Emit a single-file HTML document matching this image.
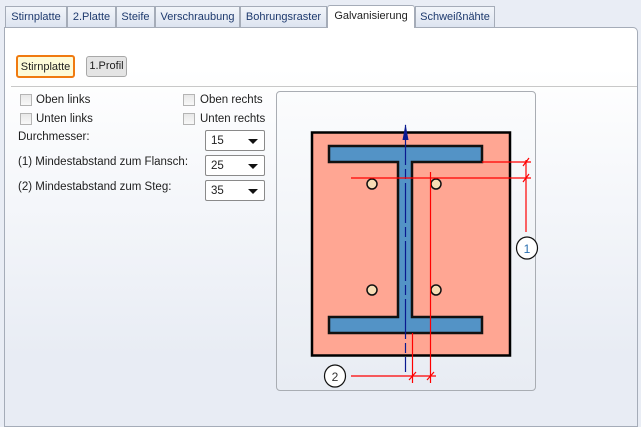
<!DOCTYPE html>
<html><head><meta charset="utf-8"><style>
*{margin:0;padding:0;box-sizing:border-box}
body{width:641px;height:409px;overflow:hidden;background:#e9edf5;font-family:"Liberation Sans",sans-serif;font-size:11.5px;color:#1e1e1e;position:relative}
.tab{position:absolute;top:6px;height:21px;border:1px solid #a5acb8;border-bottom:none;background:linear-gradient(#f2f5fa,#dde4f0);color:#1e3a6e;padding-top:4px;text-align:center;font-size:11px;white-space:nowrap}
.panel{position:absolute;left:4px;top:27px;width:634px;height:400px;border:1px solid #a5acb8;border-radius:0 5px 0 0;background:linear-gradient(#ffffff 0px,#ffffff 40px,#e8ecf4 330px)}
.a{position:absolute;white-space:nowrap}
.cb{position:absolute;width:12px;height:12px;border:1px solid #b4b4b4;background:linear-gradient(#e8e8e8,#f8f8f8)}
.dd{position:absolute;left:205px;width:60px;height:21px;border:1px solid #8a8a8a;border-radius:2px;background:#fff;padding:4px 0 0 5px}
.dd:after{content:"";position:absolute;right:6px;top:8px;border-left:5px solid transparent;border-right:5px solid transparent;border-top:5px solid #111}
</style></head><body>
<div class="panel"></div>
<div class="tab" style="left:5px;width:62px">Stirnplatte</div>
<div class="tab" style="left:67px;width:49px">2.Platte</div>
<div class="tab" style="left:116px;width:39px">Steife</div>
<div class="tab" style="left:155px;width:85px">Verschraubung</div>
<div class="tab" style="left:240px;width:87px">Bohrungsraster</div>
<div class="tab" style="left:327px;top:5px;width:88px;height:23px;background:#fff;color:#1e1e1e;border-radius:3px 3px 0 0">Galvanisierung</div>
<div class="tab" style="left:415px;width:80px">Schweißnähte</div>

<div class="a" style="left:16px;top:55px;width:59px;height:23px;border:2px solid #f07a10;border-radius:3px;background:#fdfbd8;padding-top:4px;text-align:center;font-size:11px">Stirnplatte</div>
<div class="a" style="left:86px;top:56px;width:41px;height:21px;border:1px solid #a8a8a8;border-radius:3px;background:#e4e4e4;padding-top:3px;text-align:center;font-size:11px">1.Profil</div>
<div class="a" style="left:11px;top:86px;width:626px;height:1px;background:#c8c8c8"></div>

<div class="cb" style="left:20px;top:94px"></div><div class="a" style="left:36px;top:94px">Oben links</div>
<div class="cb" style="left:20px;top:113px"></div><div class="a" style="left:36px;top:113px">Unten links</div>
<div class="cb" style="left:183px;top:94px"></div><div class="a" style="left:200px;top:94px">Oben rechts</div>
<div class="cb" style="left:183px;top:113px"></div><div class="a" style="left:200px;top:113px">Unten rechts</div>
<div class="a" style="left:18px;top:131px">Durchmesser:</div>
<div class="a" style="left:18px;top:156px">(1) Mindestabstand zum Flansch:</div>
<div class="a" style="left:18px;top:181px">(2) Mindestabstand zum Steg:</div>
<div class="dd" style="top:130px">15</div>
<div class="dd" style="top:155px">25</div>
<div class="dd" style="top:180px">35</div>

<div class="a" style="left:276px;top:91px;width:260px;height:300px;border:1px solid #a9adb3;border-radius:4px;background:linear-gradient(#fbfcfd,#e8ecf3)"></div>
<svg class="a" style="left:0;top:0" width="641" height="409">
<rect x="312" y="132.5" width="198" height="223" fill="#ffa693" stroke="#000" stroke-width="2.5"/>
<path d="M329 146H482V162H412V317H482V333H329V317H398V162H329Z" fill="#5393c6" stroke="#111" stroke-width="2.5"/>
<g fill="#f7ddb5" stroke="#111" stroke-width="1.5">
<circle cx="372" cy="184" r="5"/><circle cx="436" cy="184" r="5"/><circle cx="372" cy="290" r="5"/><circle cx="436" cy="290" r="5"/></g>
<line x1="405.5" y1="125" x2="405.5" y2="372" stroke="#0a1a90" stroke-width="1.2" stroke-dasharray="40,4,10,4"/>
<path d="M405.5 124L408.5 140H402.5Z" fill="#0a1a90"/>
<g stroke="#f00" stroke-width="1.2" fill="none">
<line x1="482" y1="162" x2="531" y2="162"/>
<line x1="351" y1="178" x2="531" y2="178"/>
<line x1="526" y1="160" x2="526" y2="232"/>
<line x1="430.5" y1="172" x2="430.5" y2="383"/>
<line x1="412.5" y1="333" x2="412.5" y2="383"/>
<line x1="351" y1="376" x2="436" y2="376"/>
<path d="M523 166L529 158M523 182L529 174M409 380L416 372M427 380L434 372"/>
</g>
<g fill="#fff" stroke="#111" stroke-width="1.2"><ellipse cx="527" cy="248" rx="10.5" ry="11"/><ellipse cx="335" cy="376" rx="10.5" ry="11"/></g>
<text x="527" y="253" font-family="Liberation Sans" font-size="12" text-anchor="middle" fill="#2a6fb0">1</text>
<text x="335" y="381" font-family="Liberation Sans" font-size="12" text-anchor="middle" fill="#333">2</text>
</svg>
</body></html>
